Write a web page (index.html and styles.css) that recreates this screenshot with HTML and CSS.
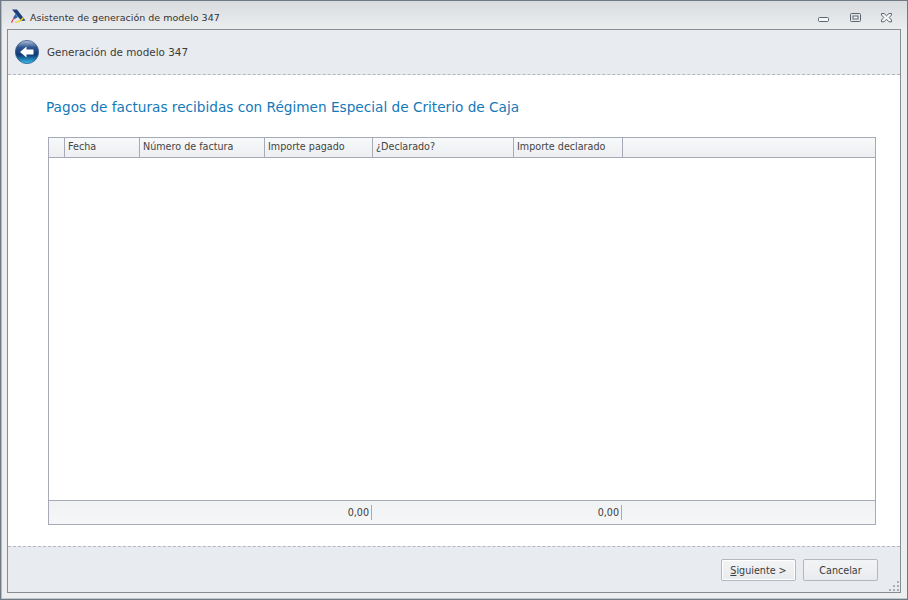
FILE: index.html
```html
<!DOCTYPE html>
<html lang="es">
<head>
<meta charset="utf-8">
<title>Asistente de generación de modelo 347</title>
<link rel="stylesheet" href="styles.css">
</head>
<body>
<div class="window">
  <div class="titlebar">
    <svg class="logo" width="16" height="16" viewBox="0 0 16 16">
      <path d="M2 1.5H7L15.5 12.5L11.5 13Z" fill="#1d3f78"/>
      <path d="M5.4 6L8 9L4.5 11.2L3.2 9.4Z" fill="#2f66ae"/>
      <path d="M5 14C8 13.6 10.6 12 12.6 9.2L14 10.4C11.6 13 8.6 14.8 5 14.9Z" fill="#f2d01e"/>
      <path d="M1.2 14.6C1.6 12.4 2.8 10.6 4.6 9.4L5 10C3.6 11.4 2.6 12.9 2.2 15Z" fill="#d8232a"/>
    </svg>
    <span class="title">Asistente de generación de modelo 347</span>
    <div class="controls">
      <svg width="12" height="12" viewBox="0 0 12 12"><rect x=".5" y="5.5" width="10" height="4" rx="1" fill="#f4f6f7" stroke="#5d666e"/></svg>
      <svg width="12" height="12" viewBox="0 0 12 12"><rect x="1.5" y="1.5" width="10" height="8" rx="1" fill="none" stroke="#5d666e"/><rect x="4" y="4" width="5" height="3" fill="#f4f6f7" stroke="#5d666e"/></svg>
      <svg width="13" height="12" viewBox="0 0 13 12"><path d="M1.5 1.5H4L6.5 3.8L9 1.5H11.5V3L9.2 5.5L11.5 8V9.8H9L6.5 7.3L4 9.8H1.5V8L3.8 5.5L1.5 3Z" fill="#f4f6f7" stroke="#5d666e"/></svg>
    </div>
  </div>
  <div class="frame">
    <div class="header">
      <svg class="back" width="26" height="26" viewBox="0 0 26 26">
        <defs>
          <linearGradient id="orb" x1="0" y1="0" x2="0" y2="1">
            <stop offset="0" stop-color="#b4c5de"/>
            <stop offset=".3" stop-color="#2f5590"/>
            <stop offset=".62" stop-color="#0e3a72"/>
            <stop offset="1" stop-color="#35c3ee"/>
          </linearGradient>
        </defs>
        <circle cx="13" cy="13" r="11.6" fill="url(#orb)" stroke="#3c5a8a" stroke-width=".8"/>
        <path d="M6 13L12.5 7.5V10.5H19.5V15.5H12.5V18.5Z" fill="#fff"/>
      </svg>
      <span class="header-text">Generación de modelo 347</span>
    </div>
    <div class="content">
      <h1 class="heading">Pagos de facturas recibidas con Régimen Especial de Criterio de Caja</h1>
      <div class="grid">
        <div class="grid-head">
          <div class="hcell"></div>
          <div class="hcell">Fecha</div>
          <div class="hcell">Número de factura</div>
          <div class="hcell">Importe pagado</div>
          <div class="hcell">¿Declarado?</div>
          <div class="hcell">Importe declarado</div>
        </div>
        <div class="grid-body"></div>
        <div class="grid-foot">
          <div class="fcell"></div>
          <div class="fcell"></div>
          <div class="fcell"></div>
          <div class="fcell sum">0,00</div>
          <div class="fcell"></div>
          <div class="fcell sum">0,00</div>
        </div>
      </div>
    </div>
    <div class="footer">
      <button class="btn primary"><span><u>S</u>iguiente &gt;</span></button>
      <button class="btn"><span>Cancelar</span></button>
      <svg class="grip" width="12" height="12" viewBox="0 0 12 12" fill="#a9aeb3">
        <rect x="9" y="1" width="2" height="2"/><rect x="5" y="5" width="2" height="2"/><rect x="9" y="5" width="2" height="2"/><rect x="1" y="9" width="2" height="2"/><rect x="5" y="9" width="2" height="2"/><rect x="9" y="9" width="2" height="2"/>
      </svg>
    </div>
  </div>
</div>
</body>
</html>
```

FILE: styles.css
```css
* { box-sizing: border-box; }
html, body { margin: 0; padding: 0; }
body { width: 908px; height: 600px; overflow: hidden; font-family: "DejaVu Sans", Tahoma, sans-serif; font-size: 9.6px; color: #3b3b3b; }
.window { width: 908px; height: 600px; display: flex; flex-direction: column; border: 1px solid #6f7a84; box-shadow: inset 1px 0 0 #b5bac0, inset 0 -1px 0 #c4c8cc; background: linear-gradient(#d9dcdf, #eceef0 30px); }
.titlebar { height: 28px; flex: none; display: flex; align-items: center; padding: 6px 14px 0 9px; }
.logo { flex: none; margin-right: 4px; margin-top: -4px; }
.title { font-size: 9.5px; line-height: 12px; color: #333; }
.controls { margin-left: auto; display: flex; gap: 19px; align-items: center; }
.controls svg { display: block; }
.frame { flex: 1; min-height: 0; margin: 0 6px 6px 6px; border: 1px solid #878d93; display: flex; flex-direction: column; background: #e8ebef; }
.header { height: 45px; flex: none; display: flex; align-items: center; padding-left: 6px; border-bottom: 1px dashed #b4b8bc; }
.back { flex: none; margin-right: 7px; }
.header-text { font-size: 10.4px; margin-top: -1px; }
.content { flex: 1; min-height: 0; background: #fff; padding: 21px 24px 21px 40px; display: flex; flex-direction: column; }
.heading { margin: 1px 0 20px -2px; font-weight: normal; font-size: 13.65px; line-height: 20px; color: #1479b8; white-space: nowrap; }
.grid { flex: 1; min-height: 0; border: 1px solid #a6aab6; display: flex; flex-direction: column; }
.grid-head, .grid-foot { display: grid; grid-template-columns: 16px 75px 125px 108px 141px 109px 1fr; flex: none; background: linear-gradient(#f8f9fa, #eceef1); }
.grid-head { height: 20px; border-bottom: 1px solid #a6aab6; }
.grid-body { flex: 1; min-height: 0; background: #fff; }
.grid-foot { height: 24px; border-top: 1px solid #a6aab6; padding: 4px 0; background: linear-gradient(#f0f2f4, #f5f6f8); }
.hcell { border-right: 1px solid #a6aab6; padding-left: 3px; line-height: 18px; color: #444; white-space: nowrap; }
.fcell { text-align: right; padding-right: 2px; line-height: 15px; }
.fcell.sum { border-right: 1px solid #a6aab6; margin-right: 1px; }
.footer { height: 46px; flex: none; position: relative; border-top: 1px dashed #b4b8bc; display: flex; justify-content: flex-end; align-items: flex-start; gap: 7px; padding: 12px 22px 0 0; }
.btn { width: 75px; height: 22px; padding: 0; font: inherit; color: #3b3b3b; background: linear-gradient(#f3f4f6, #e9ebee); border: 1px solid #b4b8bd; border-radius: 2px; }
.btn.primary { box-shadow: inset 0 0 0 1px #fff; }
.grip { position: absolute; right: 0; bottom: 0; }
```
